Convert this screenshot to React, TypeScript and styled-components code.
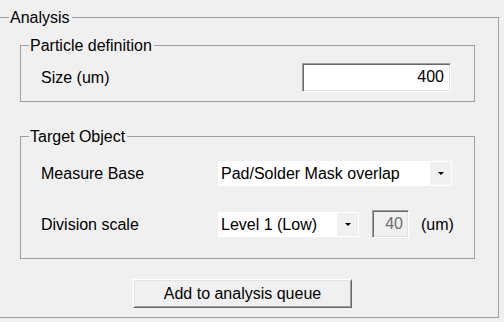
import * as React from 'react';
import styled, { createGlobalStyle, css } from 'styled-components';

const GlobalStyle = createGlobalStyle`
  html, body {
    margin: 0;
    padding: 0;
    background: #f0f0f0;
    overflow: hidden;
  }
  body {
    font-family: "Liberation Sans", Arial, sans-serif;
    font-size: 16px;
    color: #000;
  }
`;

const Page = styled.div`
  width: 504px;
  height: 322px;
  padding-top: 8px;
  box-sizing: border-box;
`;

const groupBorder = css`
  margin: 0;
  padding: 0;
  border: 1px solid #a0a0a0;
  box-sizing: border-box;
  min-width: 0;
`;

const OuterGroup = styled.fieldset`
  ${groupBorder};
  border-left: none;
  width: 499px;
  height: 310px;
  padding-top: 9px;
  display: flex;
  flex-direction: column;
`;

const InnerGroup = styled.fieldset<{ $top?: number }>`
  ${groupBorder};
  width: 455px;
  margin-left: 20px;
  margin-top: ${({ $top }) => $top ?? 0}px;
  padding: 0 23px 0 20px;
`;

// legend sits inside the padding box, so inner ones pull back over the padding
const Legend = styled.legend<{ $inner?: boolean }>`
  padding: 0 2px 0 1px;
  margin-left: ${({ $inner }) => ($inner ? -12 : 9)}px;
  line-height: 19px;
  font-size: 16px;
`;

const SizeRow = styled.div`
  display: flex;
  align-items: center;
  justify-content: space-between;
  margin-top: 8px;
  margin-bottom: 9px;
`;

const Grid = styled.div`
  display: grid;
  grid-template-columns: 177px auto;
  align-items: center;
  row-gap: 24px;
  margin-top: 15px;
  margin-bottom: 20px;
`;

const Label = styled.span`
  line-height: 19px;
`;

const sunken = css`
  box-sizing: border-box;
  border-style: solid;
  border-width: 1px;
  border-color: #a0a0a0 #ffffff #ffffff #a0a0a0;
  box-shadow: inset 1px 1px 0 #696969, inset -1px -1px 0 #e3e3e3;
`;

const TextBox = styled.div<{ $disabled?: boolean }>`
  ${sunken};
  width: ${({ $disabled }) => ($disabled ? 37 : 149)}px;
  height: ${({ $disabled }) => ($disabled ? 28 : 29)}px;
  margin-left: ${({ $disabled }) => ($disabled ? 13 : 0)}px;
  background: ${({ $disabled }) => ($disabled ? '#f0f0f0' : '#ffffff')};
  color: ${({ $disabled }) => ($disabled ? '#6d6d6d' : '#000')};
  text-align: right;
  padding-right: ${({ $disabled }) => ($disabled ? 5 : 6)}px;
  line-height: 26px;
`;

const Combo = styled.div<{ $width: number }>`
  width: ${({ $width }) => $width}px;
  height: 25px;
  background: #ffffff;
  display: flex;
  align-items: stretch;
  box-sizing: border-box;
`;

const ComboText = styled.span`
  flex: 1;
  padding-left: 3px;
  line-height: 25px;
  white-space: nowrap;
  overflow: hidden;
`;

const ComboButton = styled.span`
  width: 21px;
  margin: 1px;
  background: #f0f0f0;
  display: flex;
  align-items: center;
  justify-content: center;
`;

const Arrow = styled.span`
  width: 0;
  height: 0;
  border-left: 3px solid transparent;
  border-right: 3px solid transparent;
  border-top: 3px solid #000;
`;

const Inline = styled.div`
  display: flex;
  align-items: center;
`;

const Unit = styled.span`
  margin-left: 12px;
  line-height: 19px;
`;

const Button = styled.button`
  font: inherit;
  color: #000;
  width: 219px;
  height: 29px;
  margin: 20px 0 0 133px;
  padding: 0;
  background: #f0f0f0;
  border-style: solid;
  border-width: 1px;
  border-color: #ffffff #696969 #696969 #ffffff;
  box-shadow: inset 1px 1px 0 #e3e3e3, inset -1px -1px 0 #a0a0a0;
  box-sizing: border-box;
  line-height: 25px;
`;

const ComboBox = ({ width, text }: { width: number; text: string }) => (
  <Combo $width={width}>
    <ComboText>{text}</ComboText>
    <ComboButton>
      <Arrow />
    </ComboButton>
  </Combo>
);

const App = () => (
  <Page>
    <GlobalStyle />
    <OuterGroup>
      <Legend>Analysis</Legend>
      <InnerGroup>
        <Legend $inner>Particle definition</Legend>
        <SizeRow>
          <Label>Size (um)</Label>
          <TextBox>400</TextBox>
        </SizeRow>
      </InnerGroup>
      <InnerGroup $top={25}>
        <Legend $inner>Target Object</Legend>
        <Grid>
          <Label>Measure Base</Label>
          <ComboBox width={234} text="Pad/Solder Mask overlap" />
          <Label>Division scale</Label>
          <Inline>
            <ComboBox width={141} text="Level 1 (Low)" />
            <TextBox $disabled>40</TextBox>
            <Unit>(um)</Unit>
          </Inline>
        </Grid>
      </InnerGroup>
      <Button>Add to analysis queue</Button>
    </OuterGroup>
  </Page>
);

export default App;
